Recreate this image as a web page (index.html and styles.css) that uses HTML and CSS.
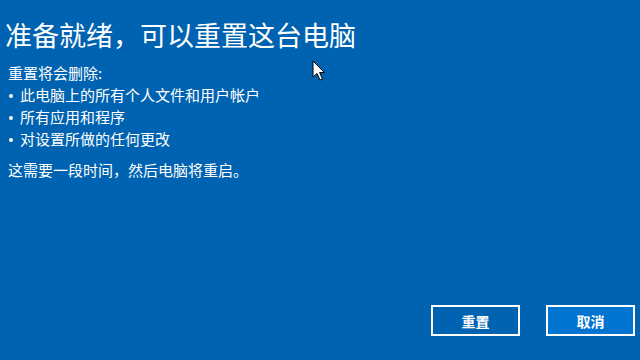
FILE: index.html
```html
<!DOCTYPE html>
<html lang="zh-CN">
<head>
<meta charset="utf-8">
<link rel="stylesheet" href="styles.css">
</head>
<body>
<div class="screen">
  <div class="content">
    <h1 class="title">准备就绪，可以重置这台电脑</h1>
    <p class="line">重置将会删除:</p>
    <ul class="list">
      <li>此电脑上的所有个人文件和用户帐户</li>
      <li>所有应用和程序</li>
      <li>对设置所做的任何更改</li>
    </ul>
    <p class="line note">这需要一段时间，然后电脑将重启。</p>
  </div>
  <div class="actions">
    <button class="btn">重置</button>
    <button class="btn primary">取消</button>
  </div>
  <svg class="cursor" width="14" height="22" viewBox="0 0 14 22">
    <path d="M1 1 L1 17 L5 13.5 L8 20 L10.5 19 L7.6 12.6 L12.5 12.6 Z" fill="#fff" stroke="#000" stroke-width="1"/>
  </svg>
</div>
</body>
</html>
```
FILE: styles.css
```css
html, body {
  margin: 0;
  padding: 0;
}
body {
  background: #0063b1;
  font-family: "Noto Sans CJK SC", "Microsoft YaHei", sans-serif;
  color: #fff;
}
.screen {
  position: relative;
  width: 640px;
  height: 360px;
  display: flex;
  flex-direction: column;
  justify-content: space-between;
  overflow: hidden;
}
.content {
  padding: 15px 0 0 5px;
}
.title {
  margin: 0 0 7px 0;
  font-size: 27px;
  font-weight: 400;
  line-height: 40px;
}
.line {
  margin: 0;
  font-size: 15px;
  line-height: 22px;
  padding-left: 3px;
}
.list {
  list-style: none;
  margin: 0;
  padding: 0;
}
.list li {
  position: relative;
  font-size: 15px;
  line-height: 22px;
  padding-left: 15px;
}
.list li::before {
  content: "";
  position: absolute;
  left: 4px;
  top: 10px;
  width: 4px;
  height: 4px;
  border-radius: 50%;
  background: #fff;
}
.note {
  margin-top: 9px;
}
.actions {
  display: flex;
  justify-content: flex-end;
  gap: 26px;
  padding: 0 5px 24px 0;
}
.btn {
  width: 89px;
  height: 31px;
  border: 2px solid #fff;
  background: transparent;
  color: #fff;
  font-family: "Noto Sans CJK SC", sans-serif;
  font-size: 14px;
  font-weight: 700;
  padding: 0;
}
.btn.primary {
  background: #0074d0;
}
.cursor {
  position: absolute;
  left: 312px;
  top: 60px;
}
```
